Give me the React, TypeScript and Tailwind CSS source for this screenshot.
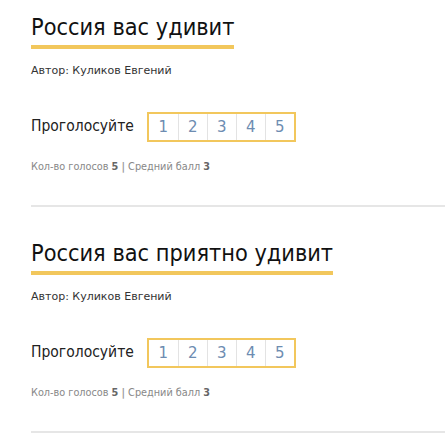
const articles = [
  { title: "Россия вас удивит", author: "Куликов Евгений", votes: 5, avg: 3 },
  { title: "Россия вас приятно удивит", author: "Куликов Евгений", votes: 5, avg: 3 },
];

function VoteBox() {
  return (
    <div className="flex h-[30px] border-2 border-[#f2c75c] bg-white">
      {[1, 2, 3, 4, 5].map((n, i) => (
        <button
          key={n}
          className={`flex w-[29px] items-center justify-center text-[15px] text-[#6d8cb1] ${i > 0 ? "border-l border-[#e3e3e3]" : ""}`}
        >
          {n}
        </button>
      ))}
    </div>
  );
}

export default function App() {
  return (
    <div className="min-h-screen bg-white pl-[31px] pt-[12px] font-['DejaVu_Sans',Tahoma,sans-serif]">
      {articles.map((a) => (
        <article key={a.title}>
          <h2 className="inline-block border-b-[4px] border-[#f2c75c] pb-[3px] text-[23.3px] leading-[30px] text-[#111] [font-stretch:semi-condensed]">
            {a.title}
          </h2>
          <p className="mt-[15px] text-[11px] leading-[14px] text-[#333]">Автор: {a.author}</p>
          <div className="mt-[34px] flex items-center gap-[13px]">
            <span className="text-[15.5px] text-[#222] [font-stretch:semi-condensed]">Проголосуйте</span>
            <VoteBox />
          </div>
          <p className="mt-[18px] text-[10.8px] leading-[14px] text-[#888] [font-stretch:semi-condensed]">
            Кол-во голосов <b className="text-[#666]">{a.votes}</b> <b className="text-[#999]">|</b> Средний балл{" "}
            <b className="text-[#666]">{a.avg}</b>
          </p>
          <div className="mt-[31px] h-[2px] bg-[#e6e6e6]" />
          <div className="h-[31px]" />
        </article>
      ))}
    </div>
  );
}
